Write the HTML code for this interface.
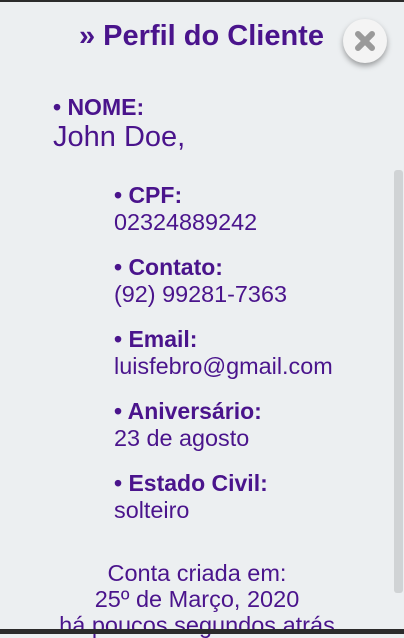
<!DOCTYPE html><html><head><style>
body{margin:0;width:404px;height:634px;overflow:hidden;background:#eceff1;font-family:"Liberation Sans",sans-serif;color:#4a148c;position:relative}
.top{position:absolute;top:0;left:0;width:404px;height:2px;background:#2b2b2b}
.bot{position:absolute;top:629px;left:0;width:404px;height:5px;background:#2b2b2b}
.t{position:absolute;white-space:nowrap;line-height:1}
.b{font-weight:bold;font-size:23px}
.v{font-size:23.4px}
.sb{position:absolute;left:394px;top:170px;width:9px;height:423px;background:#d0d3d5;border-radius:3px}
.close{position:absolute;left:343px;top:19px;width:44px;height:44px;border-radius:50%;background:#f4f4f4;box-shadow:0 3px 6px rgba(0,0,0,.35);}
</style></head><body>
<div class="top"></div>
<div class="t" style="left:79px;top:22px;font-size:29px;font-weight:bold">» Perfil do Cliente</div>
<div class="close"><svg width="44" height="44" viewBox="0 0 44 44"><path d="M15 15L29 29M29 15L15 29" stroke="#9a9a9a" stroke-width="6" stroke-linecap="round"/></svg></div>
<div class="t b" style="left:53px;top:96px">• NOME:</div>
<div class="t" style="left:53px;top:123px;font-size:29px">John Doe,</div>
<div class="t b" style="left:114px;top:184px">• CPF:</div>
<div class="t v" style="left:114px;top:211px">02324889242</div>
<div class="t b" style="left:114px;top:256px">• Contato:</div>
<div class="t v" style="left:114px;top:283px">(92) 99281-7363</div>
<div class="t b" style="left:114px;top:328px">• Email:</div>
<div class="t v" style="left:114px;top:355px">luisfebro@gmail.com</div>
<div class="t b" style="left:114px;top:400px">• Aniversário:</div>
<div class="t v" style="left:114px;top:427px">23 de agosto</div>
<div class="t b" style="left:114px;top:472px">• Estado Civil:</div>
<div class="t v" style="left:114px;top:499px">solteiro</div>
<div class="t" style="left:0;width:394px;text-align:center;top:560px;font-size:23.5px;line-height:26px">Conta criada em:<br>25º de Março, 2020<br>há poucos segundos atrás</div>
<div class="sb"></div>
<div class="bot"></div>
</body></html>
